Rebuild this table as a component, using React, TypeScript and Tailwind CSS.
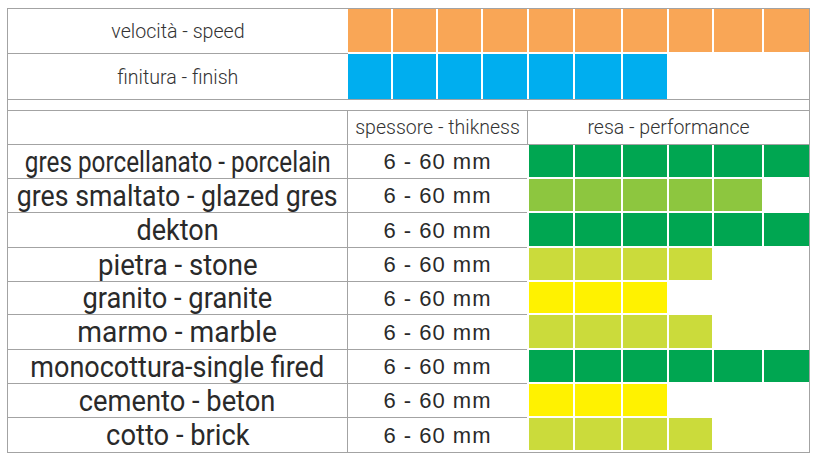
const cols10 = "grid grid-cols-[43px_43px_43px_44px_44px_46px_44px_43px_48px_45px] gap-x-[2px]";
const cols6 = "grid grid-cols-[44px_46px_44px_43px_48px_45px] gap-x-[2px]";

const roboto = { fontFamily: 'Roboto, "Noto Sans", sans-serif' };
const plain = { fontFamily: '"Liberation Sans", Arial, sans-serif' };

// sx = horizontal squeeze of each label, the source artwork is not uniform
const materials = [
  { name: "gres porcellanato - porcelain", level: 6, color: "bg-[#00a651]", h: "h-[34px]", sx: "scale-x-[0.81]" },
  { name: "gres smaltato - glazed gres", level: 5, color: "bg-[#8dc63f]", h: "h-[34px]", sx: "scale-x-[0.89]" },
  { name: "dekton", level: 6, color: "bg-[#00a651]", h: "h-[35px]", sx: "scale-x-[0.9]" },
  { name: "pietra - stone", level: 4, color: "bg-[#cbdb3b]", h: "h-[34px]", sx: "scale-x-[0.92]" },
  { name: "granito - granite", level: 3, color: "bg-[#fff200]", h: "h-[33px]", sx: "scale-x-[0.91]" },
  { name: "marmo - marble", level: 4, color: "bg-[#cbdb3b]", h: "h-[35px]", sx: "scale-x-[0.94]" },
  { name: "monocottura-single fired", level: 6, color: "bg-[#00a651]", h: "h-[34px]", sx: "scale-x-[0.9]" },
  { name: "cemento - beton", level: 3, color: "bg-[#fff200]", h: "h-[34px]", sx: "scale-x-[0.91]" },
  { name: "cotto - brick", level: 4, color: "bg-[#cbdb3b]", h: "h-[34px]", sx: "scale-x-[0.91]" },
];

function Cells({ total, filled, color }: { total: number; filled: number; color: string }) {
  return (
    <>
      {Array.from({ length: total }, (_, i) => (
        <div key={i} className={i < filled ? color : "bg-white"} />
      ))}
    </>
  );
}

export default function App() {
  return (
    <div className="w-[819px] h-[461px] bg-white overflow-hidden">
      <div className="ml-[7px] mt-[8px] w-[803px] border border-[#a3a3a3] text-[#2a2a2a]">
        {/* speed / finish */}
        <div className="flex h-[45px]">
          <div
            className="w-[340px] border-b border-[#a3a3a3] flex items-center justify-center text-[20px] font-light text-[#333]"
            style={roboto}
          >
            <span className="inline-block scale-x-[0.98] whitespace-nowrap">velocità - speed</span>
          </div>
          <div className={`${cols10} flex-1 pb-[2px]`}>
            <Cells total={10} filled={10} color="bg-[#f9a656]" />
          </div>
        </div>
        <div className="flex h-[46px] border-b border-[#a3a3a3]">
          <div
            className="w-[340px] flex items-center justify-center text-[20px] font-light text-[#333]"
            style={roboto}
          >
            <span className="inline-block scale-x-[0.98] whitespace-nowrap">finitura - finish</span>
          </div>
          <div className={`${cols10} flex-1`}>
            <Cells total={10} filled={7} color="bg-[#00aeef]" />
          </div>
        </div>
        <div className="h-[11px] border-b border-[#a3a3a3]" />

        {/* header */}
        <div
          className="flex h-[34px] border-b border-[#a3a3a3] text-[19.5px] font-light text-[#333]"
          style={roboto}
        >
          <div className="w-[340px] border-r border-[#a3a3a3]" />
          <div className="w-[180px] border-r border-[#a3a3a3] flex items-center justify-center whitespace-nowrap">
            spessore - thikness
          </div>
          <div className="flex-1 flex items-center justify-center whitespace-nowrap">resa - performance</div>
        </div>

        {/* materials */}
        {materials.map((m, idx) => {
          const last = idx === materials.length - 1;
          return (
            <div key={m.name} className={`flex ${m.h}`}>
              <div
                className={`w-[340px] border-r border-[#a3a3a3] ${last ? "" : "border-b"} flex items-center justify-center text-[30px] leading-none`}
                style={roboto}
              >
                <span className={`inline-block ${m.sx} whitespace-nowrap`}>{m.name}</span>
              </div>
              <div
                className={`w-[179px] ${last ? "" : "border-b border-[#a3a3a3]"} flex items-center justify-center text-[22px] tracking-[1px]`}
                style={plain}
              >
                6 - 60 mm
              </div>
              <div className={`${cols6} ml-[2px] flex-1 pb-[2px]`}>
                <Cells total={6} filled={m.level} color={m.color} />
              </div>
            </div>
          );
        })}
      </div>
    </div>
  );
}
